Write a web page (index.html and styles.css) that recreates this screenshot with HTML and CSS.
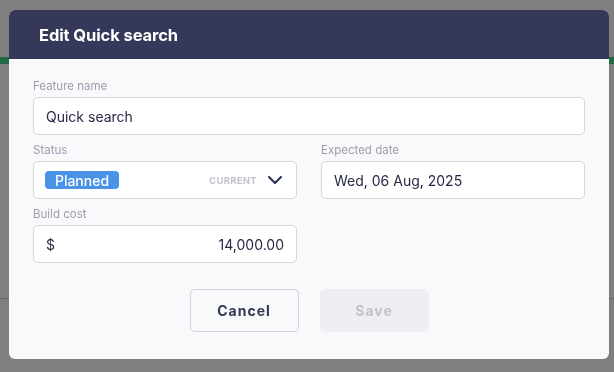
FILE: index.html
```html
<!DOCTYPE html>
<html>
<head>
<meta charset="utf-8">
<link rel="stylesheet" href="styles.css">
</head>
<body>
<div class="page">
  <div class="topbar"></div>
  <div class="greenbar"></div>
  <div class="content"></div>
  <div class="divider"></div>
</div>
<div class="overlay">
  <div class="modal">
    <div class="modal-header">Edit Quick search</div>
    <div class="modal-body">
      <div class="field">
        <label class="label">Feature name</label>
        <div class="input">Quick search</div>
      </div>
      <div class="grid">
        <div class="field">
          <label class="label">Status</label>
          <div class="input select">
            <span class="badge">Planned</span>
            <span class="current">CURRENT</span>
            <svg class="chev" width="14" height="8" viewBox="0 0 14 8"><path d="M1 1 L7 7 L13 1" fill="none" stroke="#2a3152" stroke-width="2" stroke-linecap="round" stroke-linejoin="round"/></svg>
          </div>
        </div>
        <div class="field">
          <label class="label">Expected date</label>
          <div class="input">Wed, 06 Aug, 2025</div>
        </div>
        <div class="field">
          <label class="label">Build cost</label>
          <div class="input money"><span>$</span><span>14,000.00</span></div>
        </div>
      </div>
      <div class="actions">
        <button class="btn cancel">Cancel</button>
        <button class="btn save">Save</button>
      </div>
    </div>
  </div>
</div>
</body>
</html>
```
FILE: styles.css
```css
* { box-sizing: border-box; }
html, body { margin: 0; padding: 0; }
body {
  width: 614px;
  height: 372px;
  overflow: hidden;
  background: #7f7f7f;
  font-family: "Inter", "Liberation Sans", sans-serif;
}
.page { display: flex; flex-direction: column; height: 372px; }
.topbar { height: 57px; background: #7f7f7f; }
.greenbar { height: 7px; background: #1f6a45; }
.content { height: 234px; background: #7f7f7f; }
.divider { height: 1px; background: #6a6a6a; }

.overlay {
  position: fixed;
  inset: 0;
  padding: 10px 5px 13px 9px;
}
.modal {
  width: 600px;
  height: 349px;
  background: #f8f9fb;
  border-radius: 6px;
  overflow: hidden;
  display: flex;
  flex-direction: column;
}
.modal-header {
  height: 49px;
  background: #353859;
  color: #ffffff;
  font-weight: 700;
  font-size: 16.5px;
  padding-left: 30px;
  display: flex;
  align-items: center;
  letter-spacing: -0.1px;
}
.modal-body {
  padding: 20px 24px 27px 24px;
  display: flex;
  flex-direction: column;
}
.field { display: flex; flex-direction: column; }
.label {
  font-size: 11.5px;
  line-height: 15px;
  color: #9d9cb0;
  margin-bottom: 3px;
}
.input {
  height: 38px;
  background: #ffffff;
  border: 1px solid #d6d6dc;
  border-radius: 5px;
  padding: 0 12px;
  display: flex;
  align-items: center;
  font-size: 14px;
  color: #262944;
}
.grid {
  margin-top: 8px;
  display: grid;
  grid-template-columns: 264px 264px;
  column-gap: 24px;
  row-gap: 8px;
}
.select { padding-left: 11px; padding-right: 14px; }
.badge {
  background: #4a92e6;
  color: #ffffff;
  font-weight: 500;
  font-size: 14px;
  height: 18px;
  width: 74px;
  border-radius: 4px;
  display: flex;
  align-items: center;
  justify-content: center;
}
.current {
  margin-left: auto;
  font-size: 9.5px;
  font-weight: 700;
  letter-spacing: 0.3px;
  color: #c3c3cc;
  margin-right: 11px;
}
.chev { display: block; }
.money { justify-content: space-between; }
.actions {
  margin-top: 26px;
  display: flex;
  justify-content: center;
  gap: 21px;
}
.btn {
  width: 109px;
  height: 43px;
  border-radius: 5px;
  font-family: inherit;
  font-size: 14px;
  font-weight: 700;
  letter-spacing: 1px;
}
.cancel {
  background: transparent;
  border: 1px solid #d0d0d8;
  color: #33364f;
}
.save {
  background: #eeeff3;
  border: none;
  color: #c2c2c9;
}
```
